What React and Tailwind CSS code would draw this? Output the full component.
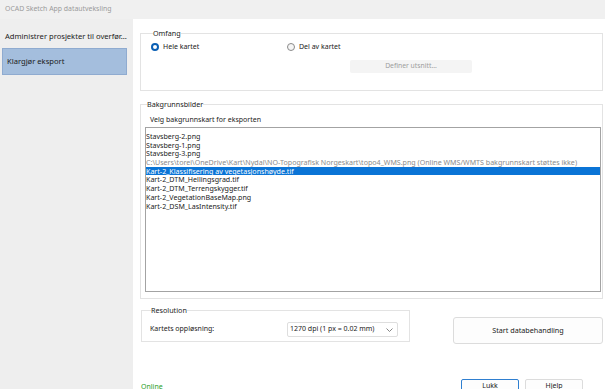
import React from 'react';

const files = [
  { name: 'Stavsberg-2.png' },
  { name: 'Stavsberg-1.png' },
  { name: 'Stavsberg-3.png' },
  {
    name: 'C:\\Users\\torei\\OneDrive\\Kart\\Nydal\\NO-Topografisk Norgeskart\\topo4_WMS.png (Online WMS/WMTS bakgrunnskart støttes ikke)',
    disabled: true,
  },
  { name: 'Kart-2_Klassifisering av vegetasjonshøyde.tif', selected: true },
  { name: 'Kart-2_DTM_Hellingsgrad.tif' },
  { name: 'Kart-2_DTM_Terrengskygger.tif' },
  { name: 'Kart-2_VegetationBaseMap.png' },
  { name: 'Kart-2_DSM_LasIntensity.tif' },
];

function Radio({ checked, label }) {
  return (
    <label className="flex items-center gap-[4px]">
      {checked ? (
        <span className="w-[8px] h-[8px] rounded-full border-[2.5px] border-[#0a5fb4] bg-white" />
      ) : (
        <span className="w-[8px] h-[8px] rounded-full border border-[#8a8a8a] bg-[#f6f6f6]" />
      )}
      <span>{label}</span>
    </label>
  );
}

export default function App() {
  return (
    <div className="w-[605px] h-[389px] overflow-hidden flex flex-col bg-[#f0f0f0] text-[#1b1b1b] font-['Noto_Sans',sans-serif] text-[7px]">
      {/* title bar */}
      <div className="h-[19px] shrink-0 flex items-center pl-[5px] text-[6.9px] text-[#9b9b9b]">
        OCAD Sketch App datautveksling
      </div>

      <div className="flex flex-1 min-h-0">
        {/* sidebar */}
        <div className="w-[133px] shrink-0 bg-[#eeeeee] pt-[6px] px-[2px]">
          <div className="h-[23px] flex items-center pl-[3px] text-[7.6px] whitespace-nowrap">
            Administrer prosjekter til overfør...
          </div>
          <div className="h-[27px] flex items-center pl-[4px] text-[7.6px] bg-[#a4bedd] border border-[#8fabd0] w-[125px]">
            Klargjør eksport
          </div>
        </div>

        {/* content */}
        <div className="flex-1 min-w-0 bg-white pl-[7px] pr-[2px] pt-[8px] flex flex-col">
          <fieldset className="shrink-0 min-w-0 h-[64px] border border-[#e3e3e3] pl-[10px] pr-[12px]">
            <legend className="ml-[2px] text-[7.2px] leading-[12px]">Omfang</legend>
            <div className="flex items-center h-[12px] mt-[2px]">
              <div className="w-[136px]">
                <Radio checked label="Hele kartet" />
              </div>
              <Radio label="Del av kartet" />
            </div>
            <div className="flex mt-[7px] pl-[199px]">
              <button className="w-[122px] h-[13px] bg-[#f4f4f4] rounded-[2px] text-[6.8px] text-[#9c9c9c]">
                Definer utsnitt...
              </button>
            </div>
          </fieldset>

          <fieldset className="shrink-0 min-w-0 h-[201px] mt-[7px] border border-[#e3e3e3] pl-[4px] pr-[1px]">
            <legend className="ml-[2px] text-[7.2px] leading-[12px]">Bakgrunnsbilder</legend>
            <div className="pl-[5px] h-[17px] pt-[3px] flex items-center">Velg bakgrunnskart for eksporten</div>
            <div className="h-[165px] border border-[#a3a3a3] pt-[4px] text-[7.1px] leading-[8.7px] whitespace-nowrap overflow-hidden">
              {files.map((f) => (
                <div
                  key={f.name}
                  className={
                    f.selected
                      ? 'bg-[#0a74d6] text-white h-[8.7px]'
                      : f.disabled
                      ? 'text-[#8a8a8a] h-[8.7px]'
                      : 'h-[8.7px]'
                  }
                >
                  {f.name}
                </div>
              ))}
            </div>
          </fieldset>

          <div className="shrink-0 flex mt-[5px]">
            <fieldset className="min-w-0 w-[269px] h-[38px] border border-[#e3e3e3] pl-[8px] ml-[1px]">
              <legend className="ml-[1px] text-[7.2px] leading-[12px]">Resolution</legend>
              <div className="flex items-center mt-[6px]">
                <span className="w-[137px]">Kartets oppløsning:</span>
                <div className="w-[111px] h-[15px] border border-[#dedede] rounded-[2px] flex items-center justify-between pl-[2px] pr-[4px] text-[7px] whitespace-nowrap">
                  <span>1270 dpi (1 px = 0.02 mm)</span>
                  <svg width="7" height="4" viewBox="0 0 7 4" fill="none">
                    <path d="M0.5 0.5L3.5 3.5L6.5 0.5" stroke="#777" strokeWidth="0.9" />
                  </svg>
                </div>
              </div>
            </fieldset>
            <div className="flex-1 flex justify-end pt-[13px]">
              <button className="w-[150px] h-[27px] border border-[#dcdcdc] rounded-[3px] bg-[#fdfdfd] text-[7.2px]">
                Start databehandling
              </button>
            </div>
          </div>

          <div className="shrink-0 flex items-start mt-[35px] pl-[1px]">
            <span className="text-[#1f9e1f] mt-[3px] text-[7px]">Online</span>
            <div className="flex-1" />
            <button className="w-[58px] h-[15px] border-[1.5px] border-[#2f7fd0] rounded-[2px] bg-[#fdfdfd] text-[7px] mr-[6px]">
              Lukk
            </button>
            <button className="w-[58px] h-[15px] border border-[#dcdcdc] rounded-[2px] bg-[#fdfdfd] text-[7px] mr-[20px]">
              Hjelp
            </button>
          </div>
        </div>
      </div>
    </div>
  );
}
